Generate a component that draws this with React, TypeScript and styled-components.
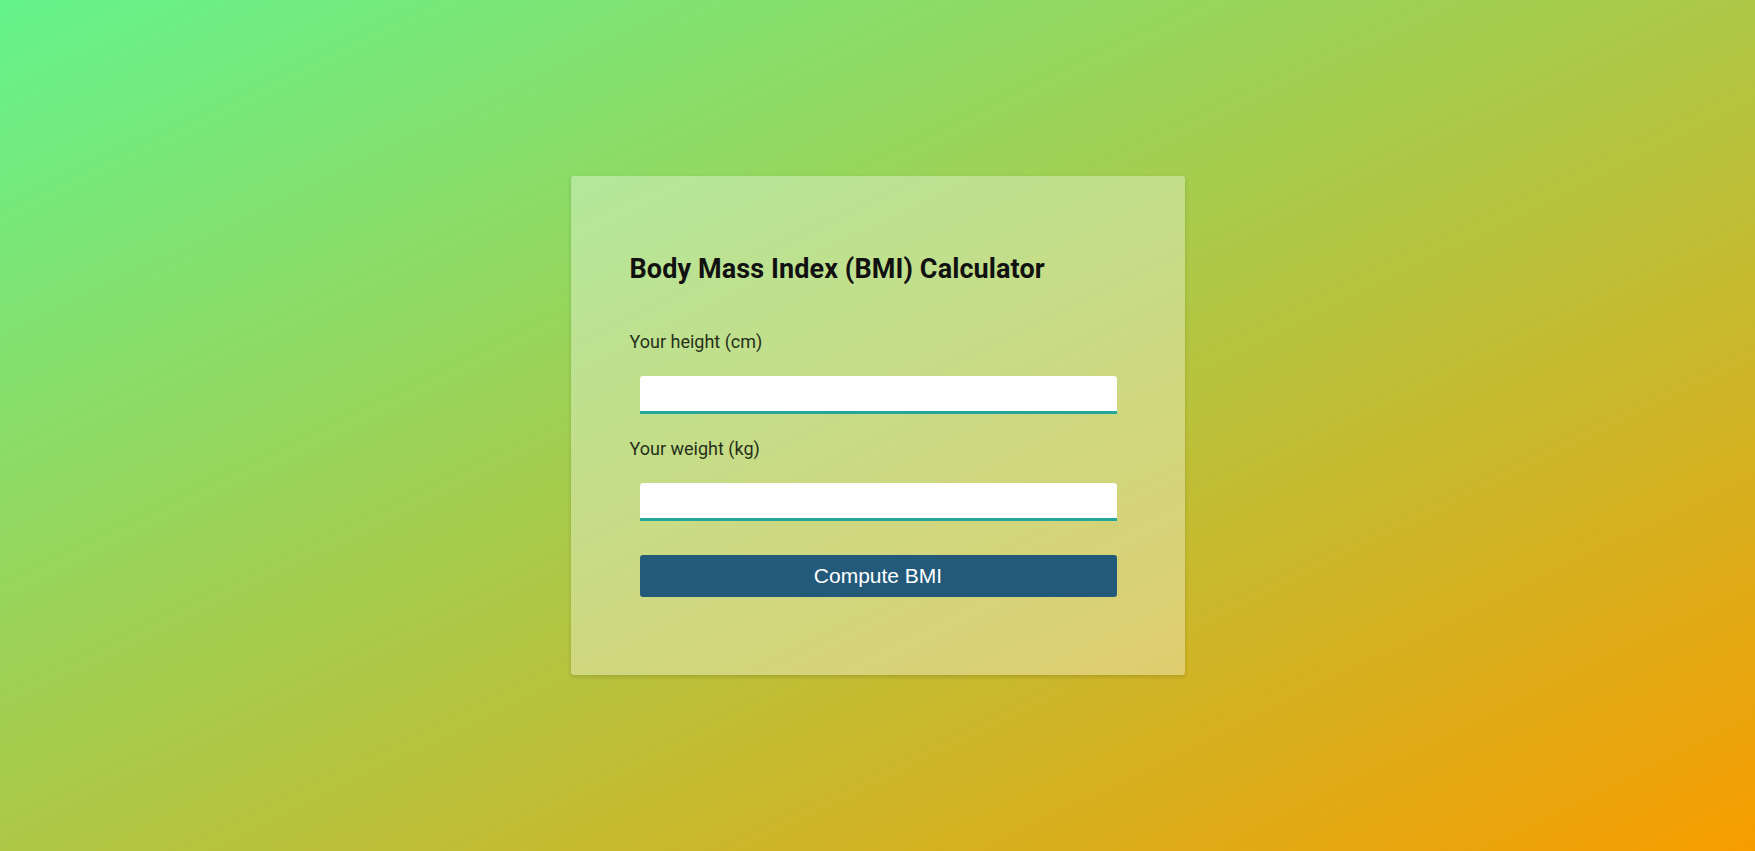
import styled, { createGlobalStyle } from 'styled-components';

const GlobalStyle = createGlobalStyle`
  html, body {
    margin: 0;
    padding: 0;
  }

  body {
    font-family: Roboto, 'Liberation Sans', sans-serif;
  }
`;

const Page = styled.div`
  min-height: 100vh;
  display: flex;
  align-items: center;
  justify-content: center;
  background: linear-gradient(to bottom right, #64f38c, #f79d00);
`;

const Card = styled.form`
  width: 614px;
  box-sizing: border-box;
  padding: 77px 58px 78px 59px;
  background: rgba(255, 255, 255, 0.34);
  border-radius: 3px;
  box-shadow: 0 2px 4px rgba(0, 0, 0, 0.14);
`;

const Title = styled.h2`
  margin: 0 0 46px;
  font-size: 27px;
  font-weight: 700;
  line-height: 32px;
  letter-spacing: 0.1px;
  color: #111;
`;

const Label = styled.label`
  display: block;
  font-size: 18px;
  line-height: 21px;
  color: #263019;
`;

const Input = styled.input`
  display: block;
  box-sizing: border-box;
  width: calc(100% - 20px);
  height: 38px;
  margin: 24px 10px;
  padding: 0 8px;
  border: none;
  border-bottom: 3px solid #26a69a;
  border-radius: 3px 3px 0 0;
  background: #fff;
  font-size: 16px;
  outline: none;
`;

const Button = styled.button`
  display: block;
  box-sizing: border-box;
  width: calc(100% - 20px);
  height: 42px;
  margin: 34px 10px 0;
  border: none;
  border-radius: 3px;
  background: #235a7a;
  color: #fff;
  font-family: 'Liberation Sans', Arial, sans-serif;
  font-size: 21px;
  cursor: pointer;
`;

const App = () => {
  return (
    <Page>
      <GlobalStyle />
      <Card onSubmit={(e) => e.preventDefault()}>
        <Title>Body Mass Index (BMI) Calculator</Title>
        <Label htmlFor="height">Your height (cm)</Label>
        <Input id="height" type="text" />
        <Label htmlFor="weight">Your weight (kg)</Label>
        <Input id="weight" type="text" />
        <Button type="submit">Compute BMI</Button>
      </Card>
    </Page>
  );
};

export default App;
